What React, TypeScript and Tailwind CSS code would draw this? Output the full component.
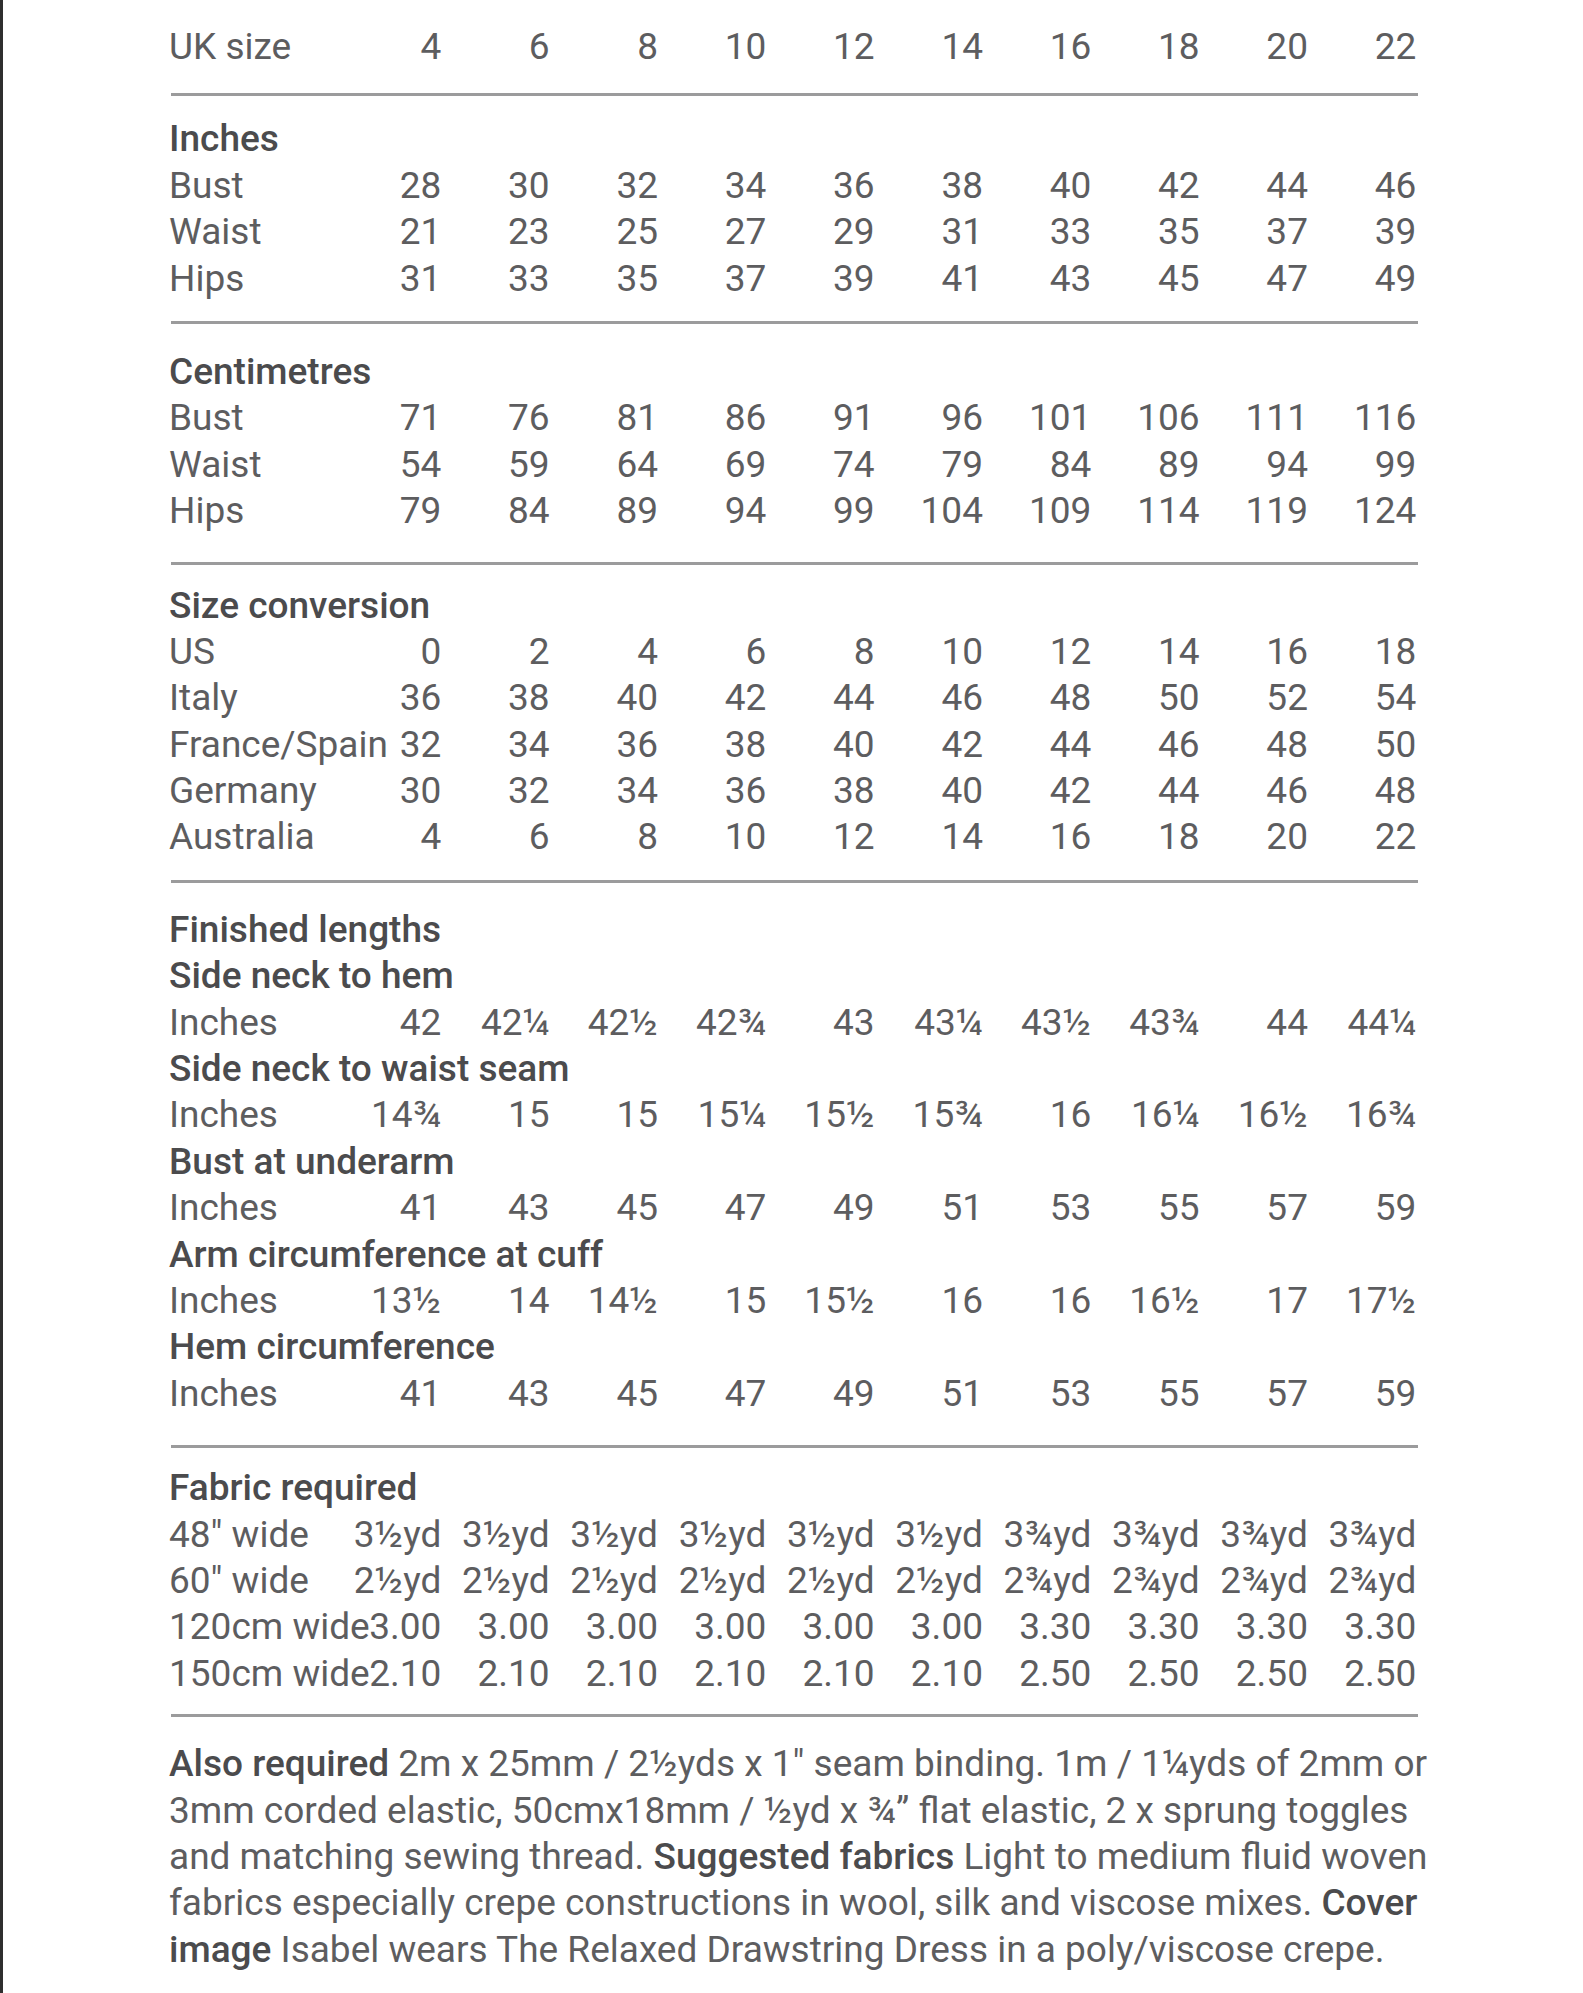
import React from "react";

const sizes = ["4", "6", "8", "10", "12", "14", "16", "18", "20", "22"];

type RowData = { label: string; values?: string[]; head?: boolean };

function Row({ label, values, head }: RowData) {
  return (
    <div className="grid grid-cols-[164px_repeat(10,108.33px)] h-[46.4px] leading-[46.4px]">
      <div
        className={
          head
            ? "whitespace-nowrap font-medium text-[#4b4b4d] col-span-11"
            : "whitespace-nowrap"
        }
      >
        {label}
      </div>
      {values &&
        values.map((v, i) => (
          <div key={i} className="text-right whitespace-nowrap">
            {v}
          </div>
        ))}
    </div>
  );
}

function Rule() {
  return <div className="ml-[2px] w-[1247px] h-[3px] bg-[#9b9b9c]" />;
}

const rep = (a: string, n: number, b: string, m: number) => [
  ...Array(n).fill(a),
  ...Array(m).fill(b),
];

export default function App() {
  return (
    <div className="min-h-screen bg-white border-l-[3px] border-[#2f2f2f] pl-[166px] pt-[24px] font-[Roboto,sans-serif] text-[37px] text-[#5d5d5f]">
      <div className="pb-[23px]">
        <Row label="UK size" values={sizes} />
      </div>
      <Rule />
      <div className="pt-[20px] pb-[19px]">
        <Row label="Inches" head />
        <Row label="Bust" values={["28", "30", "32", "34", "36", "38", "40", "42", "44", "46"]} />
        <Row label="Waist" values={["21", "23", "25", "27", "29", "31", "33", "35", "37", "39"]} />
        <Row label="Hips" values={["31", "33", "35", "37", "39", "41", "43", "45", "47", "49"]} />
      </div>
      <Rule />
      <div className="pt-[25px] pb-[27px]">
        <Row label="Centimetres" head />
        <Row label="Bust" values={["71", "76", "81", "86", "91", "96", "101", "106", "111", "116"]} />
        <Row label="Waist" values={["54", "59", "64", "69", "74", "79", "84", "89", "94", "99"]} />
        <Row label="Hips" values={["79", "84", "89", "94", "99", "104", "109", "114", "119", "124"]} />
      </div>
      <Rule />
      <div className="pt-[18px] pb-[19px]">
        <Row label="Size conversion" head />
        <Row label="US" values={["0", "2", "4", "6", "8", "10", "12", "14", "16", "18"]} />
        <Row label="Italy" values={["36", "38", "40", "42", "44", "46", "48", "50", "52", "54"]} />
        <Row label="France/Spain" values={["32", "34", "36", "38", "40", "42", "44", "46", "48", "50"]} />
        <Row label="Germany" values={["30", "32", "34", "36", "38", "40", "42", "44", "46", "48"]} />
        <Row label="Australia" values={["4", "6", "8", "10", "12", "14", "16", "18", "20", "22"]} />
      </div>
      <Rule />
      <div className="pt-[24px] pb-[28px]">
        <Row label="Finished lengths" head />
        <Row label="Side neck to hem" head />
        <Row label="Inches" values={["42", "42¼", "42½", "42¾", "43", "43¼", "43½", "43¾", "44", "44¼"]} />
        <Row label="Side neck to waist seam" head />
        <Row label="Inches" values={["14¾", "15", "15", "15¼", "15½", "15¾", "16", "16¼", "16½", "16¾"]} />
        <Row label="Bust at underarm" head />
        <Row label="Inches" values={["41", "43", "45", "47", "49", "51", "53", "55", "57", "59"]} />
        <Row label="Arm circumference at cuff" head />
        <Row label="Inches" values={["13½", "14", "14½", "15", "15½", "16", "16", "16½", "17", "17½"]} />
        <Row label="Hem circumference" head />
        <Row label="Inches" values={["41", "43", "45", "47", "49", "51", "53", "55", "57", "59"]} />
      </div>
      <Rule />
      <div className="pt-[17px] pb-[17px]">
        <Row label="Fabric required" head />
        <Row label={'48" wide'} values={rep("3½yd", 6, "3¾yd", 4)} />
        <Row label={'60" wide'} values={rep("2½yd", 6, "2¾yd", 4)} />
        <Row label="120cm wide" values={rep("3.00", 6, "3.30", 4)} />
        <Row label="150cm wide" values={rep("2.10", 6, "2.50", 4)} />
      </div>
      <Rule />
      <p className="pt-[24px] w-[1300px] leading-[46.4px] whitespace-nowrap">
        <span className="font-medium text-[#4b4b4d]">Also required</span> 2m x 25mm / 2½yds x 1" seam binding. 1m / 1¼yds of 2mm or
        <br />
        3mm corded elastic, 50cmx18mm / ½yd x ¾” flat elastic, 2 x sprung toggles
        <br />
        and matching sewing thread. <span className="font-medium text-[#4b4b4d]">Suggested fabrics</span> Light to medium fluid woven
        <br />
        fabrics especially crepe constructions in wool, silk and viscose mixes. <span className="font-medium text-[#4b4b4d]">Cover</span>
        <br />
        <span className="font-medium text-[#4b4b4d]">image</span> Isabel wears The Relaxed Drawstring Dress in a poly/viscose crepe.
      </p>
    </div>
  );
}
